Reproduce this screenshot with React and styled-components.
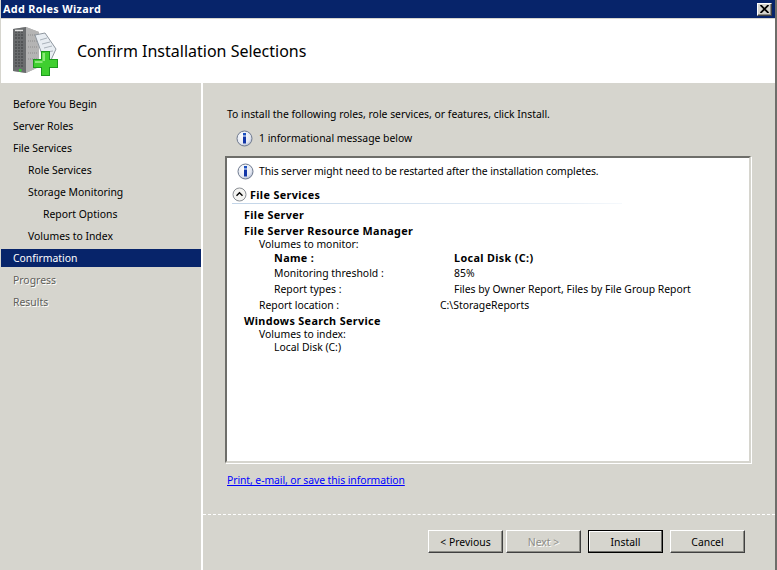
import styled, { createGlobalStyle } from 'styled-components'

const GlobalStyle = createGlobalStyle`
  html, body { margin: 0; padding: 0; background: #d6d5ce; }
  * { box-sizing: border-box; }
`

const Win = styled.div`
  width: 777px;
  height: 570px;
  display: flex;
  flex-direction: column;
  background: #d6d5ce;
  border-left: 1px solid #d6d5ce;
  border-right: 2px solid #6e6e6a;
  font-family: "Noto Sans", sans-serif;
  font-size: 10.4px;
  color: #000;
  overflow: hidden;
`
const TitleBar = styled.div`
  height: 18px;
  flex: none;
  display: flex;
  align-items: center;
  justify-content: space-between;
  padding: 0 3px 0 2px;
  background: #07246a;
  color: #fff;
  font-size: 10.8px;
  letter-spacing: 0.35px;
  font-weight: bold;
  line-height: 18px;
`
const CloseBtn = styled.div`
  width: 15px;
  height: 13px;
  display: flex;
  align-items: center;
  justify-content: center;
  background: #d6d5ce;
  border: 1px solid;
  border-color: #fff #404040 #404040 #fff;
  box-shadow: inset -1px -1px 0 #8c8c86;
`
const Banner = styled.div`
  height: 64px;
  flex: none;
  margin-top: 1px;
  display: flex;
  align-items: center;
  background: #fff;
  padding-left: 12px;
`
const Heading = styled.h1`
  margin: 0 0 0 19px;
  font-size: 16px;
  font-weight: normal;
`
const Body = styled.div`
  flex: 1;
  display: flex;
  min-height: 0;
`
const Side = styled.nav`
  width: 200px;
  flex: none;
  padding-top: 12px;
  display: flex;
  flex-direction: column;
  gap: 4px;
`
const NavItem = styled.div`
  height: 18px;
  line-height: 18px;
  padding-left: ${(p) => 12 + p.$level * 15}px;
  background: ${(p) => (p.$active ? '#07246a' : 'transparent')};
  color: ${(p) => (p.$active ? '#fff' : p.$dim ? '#5f5f5b' : '#000')};
  text-shadow: ${(p) => (p.$dim ? '1px 1px 0 #fff' : 'none')};
`
const Main = styled.main`
  flex: 1;
  border-left: 2px solid #fff;
  display: flex;
  flex-direction: column;
`
const Content = styled.div`
  height: 431px;
  flex: none;
  padding: 22px 24px 0 24px;
`
const Intro = styled.div`
  line-height: 18px;
`
const InfoLine = styled.div`
  display: flex;
  align-items: center;
  gap: 6px;
  height: 18px;
  margin-top: 6px;
  padding-left: 9px;
`
const Box = styled.div`
  height: 307px;
  margin: 9px 0 0 -2px;
  background: #fff;
  border: 2px solid;
  border-color: #6e6e6a #d6d5ce #d6d5ce #6e6e6a;
  box-shadow: 1px 1px 0 #fff;
  padding: 4px 0 0 5px;
`
const BoxInfo = styled.div`
  display: flex;
  align-items: center;
  gap: 5px;
  height: 18px;
  padding-left: 5px;
  letter-spacing: -0.07px;
`
const Section = styled.div`
  display: flex;
  align-items: center;
  gap: 3px;
  height: 18px;
  margin-top: 6px;
  font-size: 10.8px;
  letter-spacing: 0.35px;
  font-weight: bold;
  width: 390px;
  border-bottom: 1px solid;
  border-image: linear-gradient(to right, #c3d5e8, #e6eef6 85%, #f6f9fc) 1;
`
const Rows = styled.div`
  margin-top: 3px;
  padding-left: 12px;
`
const Row = styled.div`
  display: flex;
  height: ${(p) => p.$h || 13}px;
  line-height: 13px;
  padding-left: ${(p) => p.$indent * 15}px;
  font-size: ${(p) => (p.$bold ? '10.8px' : 'inherit')};
  letter-spacing: ${(p) => (p.$bold ? '0.35px' : 'normal')};
  font-weight: ${(p) => (p.$bold ? 'bold' : 'normal')};
`
const Group = styled.div`
  font-size: 10.8px;
  letter-spacing: 0.35px;
  font-weight: bold;
  height: ${(p) => p.$h || 16}px;
  line-height: ${(p) => p.$h || 16}px;
`
const Label = styled.div`
  width: ${(p) => p.$w}px;
  flex: none;
`
const PrintLink = styled.a`
  display: block;
  margin-top: 9px;
  line-height: 16px;
  letter-spacing: -0.08px;
  color: #0000ff;
  text-decoration: underline;
`
const Footer = styled.div`
  flex: 1;
  border-top: 1px dashed #fff;
  display: flex;
  justify-content: flex-end;
  padding: 15px 30px 0 0;
`
const Btn = styled.button`
  width: 75px;
  height: 23px;
  margin-left: ${(p) => p.$gap || 3}px;
  padding: 0;
  font: inherit;
  color: ${(p) => (p.$disabled ? '#8c8c86' : '#000')};
  text-shadow: ${(p) => (p.$disabled ? '1px 1px 0 #fff' : 'none')};
  background: #d6d5ce;
  border: 1px solid;
  border-color: ${(p) => (p.$primary ? '#000' : '#fff #404040 #404040 #fff')};
  box-shadow: ${(p) => (p.$primary ? 'inset -1px -1px 0 #6e6e6a, inset 1px 1px 0 #fff' : 'inset -1px -1px 0 #8c8c86')};
`

const InfoIcon = () => (
  <svg width="17" height="17" viewBox="0 0 17 17">
    <defs>
      <radialGradient id="ig" cx="0.4" cy="0.35" r="0.7">
        <stop offset="0" stopColor="#ffffff" />
        <stop offset="0.7" stopColor="#e4e8f2" />
        <stop offset="1" stopColor="#a9b4cc" />
      </radialGradient>
    </defs>
    <circle cx="8.5" cy="8.5" r="7.5" fill="url(#ig)" stroke="#6f7a8e" />
    <rect x="7" y="3" width="3" height="2.5" fill="#1a4fc0" />
    <rect x="7" y="6.5" width="3" height="7" fill="#1236a8" />
  </svg>
)

const ChevronIcon = () => (
  <svg width="15" height="15" viewBox="0 0 15 15">
    <circle cx="7.5" cy="7.5" r="6.5" fill="#f4f4f2" stroke="#8b8f95" />
    <path d="M4.5 8.8 L7.5 5.8 L10.5 8.8" fill="none" stroke="#000" strokeWidth="1.4" />
  </svg>
)

const CloseIcon = () => (
  <svg width="9" height="8" viewBox="0 0 9 8">
    <path d="M0.5 0 L8.5 8 M8.5 0 L0.5 8" stroke="#000" strokeWidth="1.8" />
  </svg>
)

const WizardIcon = () => (
  <svg width="45" height="49" viewBox="0 0 45 49">
    <path d="M0 2 L13 0 L26 5 L26 40 L13 46 L0 44 Z" fill="#a8a8a8" />
    <path d="M0 2 L13 0 L13 46 L0 44 Z" fill="#6a6c6e" />
    <path d="M13 0 L26 5 L26 40 L13 46 Z" fill="#b4b4b4" />
    <path d="M2 5 H11 M2 8 H11 M2 11 H11 M2 15 H11 M2 18 H11 M2 21 H11 M2 24 H11 M2 27 H11 M2 30 H11 M2 33 H11 M2 36 H11 M2 39 H11" stroke="#3c3e40" strokeWidth="1" strokeDasharray="2 1" />
    <path d="M2 3.5 H10" stroke="#e4e4e4" strokeWidth="1.5" />
    <path d="M15 8 H25 M15 14 H25 M15 20 H25 M15 26 H25 M15 32 H25" stroke="#8c8c8c" strokeDasharray="1 1" />
    <path d="M22 8 L32 6 L43 22 L38 33 L30 30 Z" fill="#e8edf2" stroke="#8f979f" />
    <path d="M27 13 L34 11 M29 17 L37 15 M31 21 L39 19 M33 25 L40 24" stroke="#aab2ba" />
    <rect x="6" y="42" width="2.5" height="2.5" fill="#38d038" />
    <path d="M28 24.5 H36.5 V32.5 H44.5 V40.5 H36.5 V48.5 H28 V40.5 H20.5 V32.5 H28 Z" fill="#3fcf2f" stroke="#1c9a1c" shapeRendering="crispEdges" />
    <path d="M29.5 26 H32 V34 H22 V36 H29.5 Z" fill="#8ce97a" />
  </svg>
)

const steps = [
  ['Before You Begin', 0],
  ['Server Roles', 0],
  ['File Services', 0],
  ['Role Services', 1],
  ['Storage Monitoring', 1],
  ['Report Options', 2],
  ['Volumes to Index', 1],
  ['Confirmation', 0, 'active'],
  ['Progress', 0, 'dim'],
  ['Results', 0, 'dim'],
]

export default function App() {
  return (
    <>
      <GlobalStyle />
      <Win>
        <TitleBar>
          <span>Add Roles Wizard</span>
          <CloseBtn><CloseIcon /></CloseBtn>
        </TitleBar>
        <Banner>
          <WizardIcon />
          <Heading>Confirm Installation Selections</Heading>
        </Banner>
        <Body>
          <Side>
            {steps.map(([name, level, state]) => (
              <NavItem key={name} $level={level} $active={state === 'active'} $dim={state === 'dim'}>
                {name}
              </NavItem>
            ))}
          </Side>
          <Main>
            <Content>
              <Intro>To install the following roles, role services, or features, click Install.</Intro>
              <InfoLine>
                <InfoIcon />
                <span>1 informational message below</span>
              </InfoLine>
              <Box>
                <BoxInfo>
                  <InfoIcon />
                  <span>This server might need to be restarted after the installation completes.</span>
                </BoxInfo>
                <Section>
                  <ChevronIcon />
                  <span>File Services</span>
                </Section>
                <Rows>
                  <Group>File Server</Group>
                  <Group $h={15}>File Server Resource Manager</Group>
                  <Row $indent={1}>Volumes to monitor:</Row>
                  <Row $indent={2} $bold $h={16}><Label $w={180}>Name :</Label><span>Local Disk (C:)</span></Row>
                  <Row $indent={2} $h={16}><Label $w={180}>Monitoring threshold :</Label><span>85%</span></Row>
                  <Row $indent={2} $h={16}><Label $w={180}>Report types :</Label><span>Files by Owner Report, Files by File Group Report</span></Row>
                  <Row $indent={1} $h={15}><Label $w={181}>Report location :</Label><span>C:\StorageReports</span></Row>
                  <Group $h={14}>Windows Search Service</Group>
                  <Row $indent={1}>Volumes to index:</Row>
                  <Row $indent={2}>Local Disk (C:)</Row>
                </Rows>
              </Box>
              <PrintLink href="#">Print, e-mail, or save this information</PrintLink>
            </Content>
            <Footer>
              <Btn>&lt; Previous</Btn>
              <Btn $disabled $gap={3}>Next &gt;</Btn>
              <Btn $primary $gap={7}>Install</Btn>
              <Btn $gap={7}>Cancel</Btn>
            </Footer>
          </Main>
        </Body>
      </Win>
    </>
  )
}
